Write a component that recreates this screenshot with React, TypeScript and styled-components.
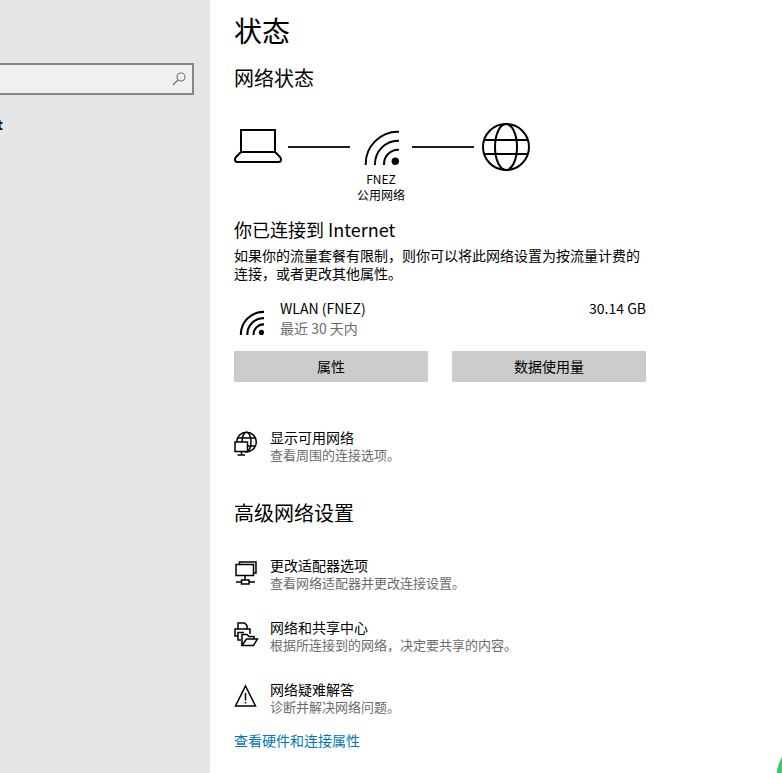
import React from "react";
import styled, { createGlobalStyle } from "styled-components";

const GlobalStyle = createGlobalStyle`
  * { box-sizing: border-box; }
  body {
    margin: 0;
    background: #fff;
    color: #000;
    font-family: "Noto Sans CJK SC", "Open Sans", sans-serif;
    font-size: 14px;
    line-height: 18px;
  }
  h1, h2, h3, p { margin: 0; font-weight: 400; }
  svg { display: block; flex: none; }
`;

const Page = styled.div`
  display: flex;
  min-height: 100vh;
  overflow: hidden;
`;

const Sidebar = styled.nav`
  flex: none;
  width: 210px;
  padding-top: 63px;
  background: #e6e6e6;
  overflow: hidden;
`;

const SearchBox = styled.label`
  display: flex;
  align-items: center;
  height: 32px;
  margin: 0 16px 0 -2px;
  padding-right: 6px;
  border: 2px solid #868686;
  background: #f0f0f0;
`;

const SearchInput = styled.input`
  flex: 1;
  min-width: 0;
  border: 0;
  outline: 0;
  background: transparent;
  font: inherit;
`;

const NavLink = styled.a`
  display: block;
  margin: 20px 0 0 -3px;
  color: #000;
  font-weight: 700;
  text-decoration: none;
`;

const Main = styled.main`
  flex: 1;
  min-width: 0;
  padding: 12px 24px 23px;
`;

const Column = styled.div`
  max-width: 412px;
`;

const Title = styled.h1`
  font-size: 28px;
  line-height: 36px;
`;

const Heading = styled.h2<{ $top: number }>`
  margin-top: ${(p) => p.$top}px;
  font-size: 20px;
  line-height: 28px;
`;

const Diagram = styled.div`
  display: grid;
  grid-template-columns: 54px 62px 62px 62px 56px;
  grid-template-rows: 48px auto;
  align-items: center;
  margin-top: 31px;
`;

const Wire = styled.span`
  height: 2px;
  background: #1c1c1c;
`;

const Centered = styled.div`
  justify-self: center;
`;

const Trailing = styled.div`
  justify-self: end;
`;

const Caption = styled.p`
  grid-column: 3;
  font-size: 12px;
  line-height: 16px;
  text-align: center;
`;

const Subheading = styled.h3`
  margin-top: 14px;
  font-size: 18px;
  line-height: 24px;
`;

const Description = styled.p`
  margin-top: 5px;
`;

const Connection = styled.div`
  display: flex;
  margin-top: 16px;
  padding-left: 5px;
  line-height: 20px;
`;

const ConnectionIcon = styled.div`
  padding-top: 12px;
`;

const ConnectionText = styled.div`
  flex: 1;
  padding-left: 16px;
`;

const Muted = styled.p`
  color: #6b6b6b;
`;

const Buttons = styled.div`
  display: grid;
  grid-template-columns: 1fr 1fr;
  gap: 24px;
  margin-top: 13px;
`;

const Button = styled.button`
  height: 31px;
  padding: 0 0 2px;
  border: 0;
  background: #ccc;
  color: #000;
  font: inherit;
`;

const Option = styled.a<{ $top: number }>`
  display: flex;
  gap: 12px;
  margin-top: ${(p) => p.$top}px;
  color: #000;
  text-decoration: none;
`;

const OptionIcon = styled.svg.attrs({
  width: 24,
  height: 24,
  viewBox: "0 0 24 24",
  fill: "none",
  stroke: "#000",
  strokeWidth: 1.5,
})`
  margin-top: 4px;
  overflow: visible;
`;

const Hint = styled.p`
  color: #6b6b6b;
  font-size: 13px;
`;

const HardwareLink = styled.a`
  display: inline-block;
  margin-top: 15px;
  color: #0078b4;
  text-decoration: none;
`;

const Bubble = styled.span`
  position: fixed;
  right: -34px;
  bottom: -42px;
  width: 40px;
  height: 68px;
  border-radius: 50%;
  background: #3cc86c;
`;

const Wifi = ({ size, stroke }: { size: number; stroke: number }) => (
  <svg width={size} height={size} viewBox="0 0 36 36" fill="none" stroke="#000" strokeWidth={stroke}>
    <path d="M2.700 36V35A32.300 32.300 0 0 1 35 2.700H36" />
    <path d="M12 36V35A23.300 23.300 0 0 1 35 11.700H36" />
    <path d="M21 36V35A14.300 14.300 0 0 1 35 20.700H36" />
    <circle cx="32.300" cy="32.300" r="3.700" fill="#000" stroke="none" />
  </svg>
);

const Laptop = () => (
  <svg width="48" height="48" viewBox="0 0 48 48" fill="none" stroke="#000" strokeWidth="2">
    <path d="M7 29V7H41V29Z" />
    <path d="M7 29L2 34Q1 35 1 36.500Q1 39 3.500 39H44.500Q47 39 47 36.500Q47 35 46 34L41 29" />
  </svg>
);

const Globe = () => (
  <svg width="48" height="48" viewBox="0 0 48 48" fill="none" stroke="#000" strokeWidth="2">
    <circle cx="24" cy="24" r="23" />
    <ellipse cx="24" cy="24" rx="11" ry="23" />
    <path d="M2 17H46M2 31H46" />
  </svg>
);

const NetworkIcon = () => (
  <OptionIcon>
    <circle cx="12.500" cy="10" r="9.800" />
    <ellipse cx="12.500" cy="10" rx="4.500" ry="9.800" />
    <path d="M3.500 6H21.500M3 14H21.500" />
    <path d="M1 10H13.500V19.500H1Z" fill="#fff" />
    <path d="M7.500 19.500V23M3.500 23H11" />
  </OptionIcon>
);

const AdapterIcon = () => (
  <OptionIcon>
    <path d="M5.500 4.500V2H22V13H19.500" />
    <path d="M2 4.500H19.500V15.500H2ZM11 15.500V20M2 22H7.500M15 22H21M7.500 20H15V24H7.500Z" />
  </OptionIcon>
);

const SharingIcon = () => (
  <OptionIcon>
    <path d="M4 7V1H10.500L13 3.500V7M4 14H1V7H16V12" />
    <path d="M10 10.500H4V18H7" />
    <path d="M8 23.500V12.500H13L15 14.500H20V17M8 23.500L12.500 17H23.500L19.500 23.500Z" />
  </OptionIcon>
);

const WarningIcon = () => (
  <OptionIcon>
    <path d="M11.500 2L21.500 22H1.500Z" />
    <path d="M11.500 9V16.500M11.500 18V19.500" />
  </OptionIcon>
);

const advanced = [
  { Icon: AdapterIcon, title: "更改适配器选项", hint: "查看网络适配器并更改连接设置。" },
  { Icon: SharingIcon, title: "网络和共享中心", hint: "根据所连接到的网络，决定要共享的内容。" },
  { Icon: WarningIcon, title: "网络疑难解答", hint: "诊断并解决网络问题。" },
];

export default function App() {
  return (
    <Page>
      <GlobalStyle />
      <Sidebar>
        <SearchBox>
          <SearchInput type="search" aria-label="搜索" />
          <svg width="14" height="14" viewBox="0 0 14 14" fill="none" stroke="#6e6e6e" strokeWidth="1.1">
            <circle cx="9" cy="5" r="4" />
            <path d="M6 8L1 13" />
          </svg>
        </SearchBox>
        <NavLink href="#">t</NavLink>
      </Sidebar>
      <Main>
        <Column>
          <Title>状态</Title>
          <Heading $top={16}>网络状态</Heading>
          <Diagram>
            <Laptop />
            <Wire />
            <Centered>
              <Wifi size={36} stroke={2} />
            </Centered>
            <Wire />
            <Trailing>
              <Globe />
            </Trailing>
            <Caption>
              FNEZ
              <br />
              公用网络
            </Caption>
          </Diagram>
          <Subheading>你已连接到 Internet</Subheading>
          <Description>
            如果你的流量套餐有限制，则你可以将此网络设置为按流量计费的连接，或者更改其他属性。
          </Description>
          <Connection>
            <ConnectionIcon>
              <Wifi size={25} stroke={3} />
            </ConnectionIcon>
            <ConnectionText>
              <p>WLAN (FNEZ)</p>
              <Muted>最近 30 天内</Muted>
            </ConnectionText>
            <span>30.14 GB</span>
          </Connection>
          <Buttons>
            <Button>属性</Button>
            <Button>数据使用量</Button>
          </Buttons>
          <Option href="#" $top={46}>
            <NetworkIcon />
            <div>
              <p>显示可用网络</p>
              <Hint>查看周围的连接选项。</Hint>
            </div>
          </Option>
          <Heading $top={35}>高级网络设置</Heading>
          {advanced.map(({ Icon, title, hint }, i) => (
            <Option key={title} href="#" $top={i ? 26 : 29}>
              <Icon />
              <div>
                <p>{title}</p>
                <Hint>{hint}</Hint>
              </div>
            </Option>
          ))}
          <HardwareLink href="#">查看硬件和连接属性</HardwareLink>
        </Column>
      </Main>
      <Bubble />
    </Page>
  );
}
